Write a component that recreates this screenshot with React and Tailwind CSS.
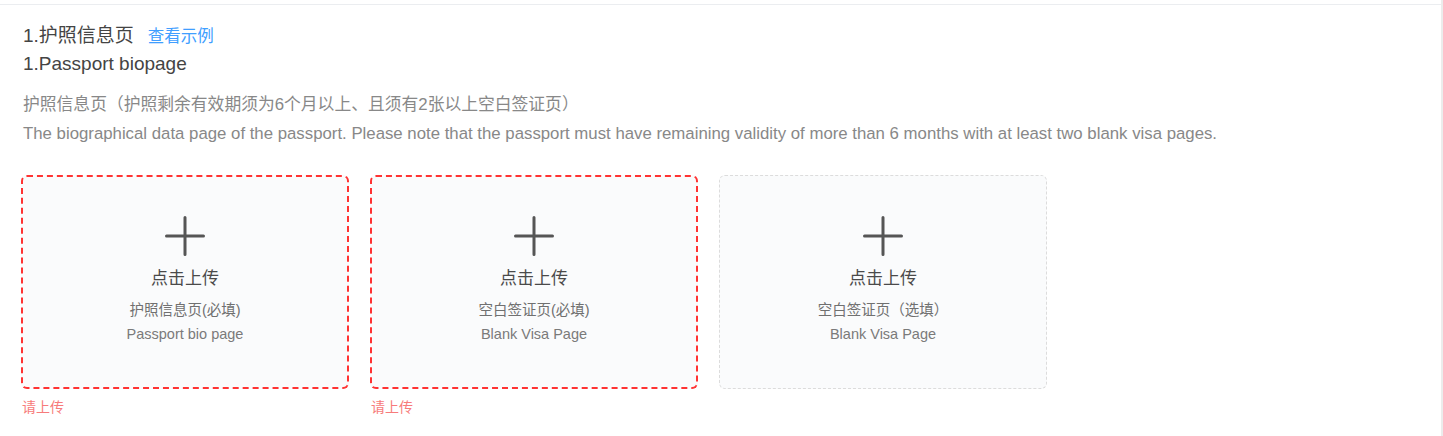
import React from 'react';

const font = { fontFamily: '"Liberation Sans", "Noto Sans CJK SC", sans-serif' };

const PlusIcon = () => (
  <svg width="40" height="40" viewBox="0 0 40 40" fill="none">
    <path d="M20 1.5V38.5M1.5 20H38.5" stroke="#555" strokeWidth="3" strokeLinecap="round" />
  </svg>
);

const uploads = [
  { zh: '护照信息页(必填)', en: 'Passport bio page', required: true },
  { zh: '空白签证页(必填)', en: 'Blank Visa Page', required: true },
  { zh: '空白签证页（选填）', en: 'Blank Visa Page', required: false },
];

const UploadCard = ({ item }) => (
  <div className="w-[328px] flex flex-col">
    <div
      className={`h-[214px] rounded-[6px] bg-[#fafbfc] flex flex-col items-center cursor-pointer ${
        item.required ? 'border-2 border-dashed border-[#f33]' : 'border border-dashed border-[#dcdcdc] pt-px'
      }`}
    >
      <div className="mt-[39px]">
        <PlusIcon />
      </div>
      <div className="mt-[11px] text-[17px] leading-[24px] text-[#4a4a4a]">点击上传</div>
      <div className="mt-[7px] text-[14.5px] leading-[24px] text-[#707070]">{item.zh}</div>
      <div className="text-[14.5px] leading-[24px] text-[#7a7a7a]">{item.en}</div>
    </div>
    {item.required && (
      <div className="mt-[9px] pl-px text-[14px] leading-[18px] text-[#f77b7b]">请上传</div>
    )}
  </div>
);

export default function App() {
  return (
    <div className="h-[436px] w-full bg-white flex overflow-hidden" style={font}>
      <div className="flex-1 pt-[4px]">
        <div className="border-t border-[#ebedf0] pl-[21px] pt-[17px]">
          <div className="flex items-center pl-[2px] text-[19px] leading-[28px] text-[#444]">
            <span>1.护照信息页</span>
            <a className="ml-[14px] text-[16.5px] text-[#409eff] cursor-pointer">查看示例</a>
          </div>
          <div className="pl-[2px] text-[19px] leading-[28px] text-[#444]">1.Passport biopage</div>

          <div className="mt-[12px] pl-[2px] text-[16.8px] leading-[29px] text-[#888]">
            <p>护照信息页（护照剩余有效期须为6个月以上、且须有2张以上空白签证页）</p>
            <p>
              The biographical data page of the passport. Please note that the passport must have remaining validity
              of more than 6 months with at least two blank visa pages.
            </p>
          </div>

          <div className="mt-[27px] flex gap-[21px]">
            {uploads.map((u, i) => (
              <UploadCard key={i} item={u} />
            ))}
          </div>
        </div>
      </div>
      <div className="w-[2px] bg-[#ececec]" />
    </div>
  );
}
